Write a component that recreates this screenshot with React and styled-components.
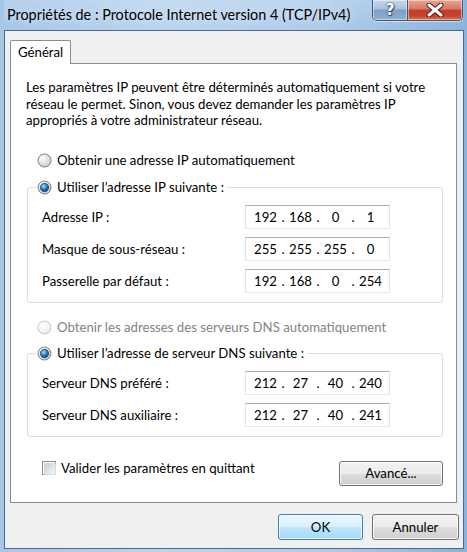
import React, { useId } from 'react';
import styled, { createGlobalStyle } from 'styled-components';

const GlobalStyle = createGlobalStyle`
  html, body { margin: 0; padding: 0; }
  body {
    width: 467px; height: 552px; overflow: hidden;
    font-family: "Lato", "Noto Sans", sans-serif;
    font-size: 13.2px; color: #000;
  }
  * { box-sizing: border-box; }
`;

const Window = styled.div`
  width: 467px;
  height: 552px;
  display: flex;
  flex-direction: column;
  padding: 0 3px 3px 4px;
  background: linear-gradient(90deg, #a6c6e8 0%, #b9d4ef 35%, #aecbea 70%, #8ab2db 100%);
`;

const TitleBar = styled.div`
  height: 30px;
  flex: none;
  display: flex;
  align-items: flex-start;
  justify-content: space-between;
  background: linear-gradient(180deg, rgba(255,255,255,0.18) 0%, rgba(255,255,255,0) 100%);
`;

const TitleText = styled.div`
  padding: 6px 0 0 3px;
  font-size: 14.4px;
  line-height: 17px;
  color: #000;
  text-shadow: 0 0 6px rgba(255,255,255,0.7);
`;

const Controls = styled.div`
  display: flex;
  margin-right: 1px;
  border: 1px solid #3f5874;
  border-top: none;
  border-radius: 0 0 5px 5px;
  overflow: hidden;
  box-shadow: 0 1px 0 rgba(255,255,255,0.5);
`;

const CtrlButton = styled.div`
  height: 20px;
  width: ${p => p.$w}px;
  display: flex;
  align-items: center;
  justify-content: center;
  box-shadow: inset 0 0 0 1px rgba(255,255,255,0.45);
  background: ${p => p.$close
    ? 'linear-gradient(180deg, #e8a493 0%, #d67a66 45%, #c2402c 50%, #c8412b 80%, #de7a55 100%)'
    : 'linear-gradient(180deg, #c5d8ec 0%, #a8c2dd 45%, #7d9fc4 50%, #8eb0d3 100%)'};
  & + & { border-left: 1px solid #3f5874; }
`;

const HelpGlyph = styled.span`
  font-family: "DejaVu Sans", sans-serif;
  font-weight: bold;
  font-size: 15px;
  line-height: 1;
  color: #fff;
  margin-top: 1px;
  text-shadow: 0 0 1px #2d4a6b, 0 0 2px #2d4a6b, 1px 1px 1px #2d4a6b;
`;

const Client = styled.div`
  flex: 1;
  display: flex;
  flex-direction: column;
  background: #f0f0f0;
  border: 1px solid #4d6a8a;
  padding: 9px 0 0 0;
`;

const TabStrip = styled.div`
  display: flex;
  padding-left: 5px;
  position: relative;
  z-index: 1;
  margin-bottom: -1px;
`;

const Tab = styled.div`
  height: 24px;
  padding: 0 7px;
  display: flex;
  align-items: center;
  padding-bottom: 1px;
  background: #fff;
  border: 1px solid #898c95;
  border-bottom: none;
  border-radius: 2px 2px 0 0;
`;

const Panel = styled.div`
  margin: 0 6px 0 5px;
  height: 440px;
  background: #fff;
  border: 1px solid #898c95;
  padding: 15px 13px 0 15px;
  display: flex;
  flex-direction: column;
`;

const Intro = styled.p`
  margin: 0;
  line-height: 16.5px;
`;

const RadioRow = styled.div`
  display: flex;
  align-items: center;
  gap: 5px;
  height: 17px;
  margin-top: ${p => p.$mt}px;
  padding-left: 11px;
  color: ${p => (p.$disabled ? '#838383' : '#000')};
`;

const Group = styled.fieldset`
  margin: ${p => p.$mt}px 0 0 1px;
  padding: 9px 0 9px 14px;
  border: 1px solid #d5dfe5;
  border-radius: 3px;
  display: flex;
  flex-direction: column;
  gap: 8px;
  min-width: 0;
`;

const Legend = styled.legend`
  margin-left: -6px;
  padding: 0 3px 0 1px;
  height: 17px;
  display: flex;
  align-items: center;
  gap: 5px;
`;

const FieldRow = styled.div`
  display: grid;
  grid-template-columns: 203px 145px;
  align-items: center;
`;

const IpBox = styled.div`
  height: 24px;
  display: flex;
  align-items: center;
  padding-left: 6px;
  background: #fff;
  border: 1px solid #e2e3ea;
  border-top-color: #abadb3;
  border-bottom-color: #e3e9ef;
`;

const Octet = styled.span`
  width: 27px;
  text-align: center;
`;

const Dot = styled.span`
  width: 8px;
  text-align: center;
`;

const BottomRow = styled.div`
  margin-top: 24px;
  display: flex;
  align-items: flex-start;
  justify-content: space-between;
  padding-left: 16px;
`;

const CheckLabel = styled.label`
  display: flex;
  align-items: center;
  gap: 5px;
  height: 17px;
  margin-top: -1px;
`;

const CheckBox = styled.span`
  width: 14px;
  height: 14px;
  border: 1px solid #8e8f8f;
  padding: 1px;
  background: #fff;
  display: block;
  &::after {
    content: '';
    display: block;
    width: 100%;
    height: 100%;
    background: linear-gradient(135deg, #cbcfd5 0%, #f6f6f6 100%);
    border: 1px solid #d8d8d8;
  }
`;

const Button = styled.div`
  width: ${p => p.$w}px;
  height: ${p => p.$h}px;
  display: flex;
  align-items: center;
  justify-content: center;
  border-radius: 3px;
  border: 1px solid ${p => (p.$default ? '#3c7fb1' : '#707070')};
  box-shadow: inset 0 0 0 1px ${p => (p.$default ? 'rgba(255,255,255,0.7)' : 'rgba(255,255,255,0.8)')};
  background: ${p => p.$default
    ? 'linear-gradient(180deg, #eaf6fd 0%, #d9f0fc 50%, #bee6fd 51%, #a7d9f5 100%)'
    : 'linear-gradient(180deg, #f2f2f2 0%, #ebebeb 50%, #dddddd 51%, #cfcfcf 100%)'};
`;

const ButtonBar = styled.div`
  margin-top: 11px;
  display: flex;
  justify-content: flex-end;
  gap: 9px;
  padding-right: 4px;
`;

function Radio({ checked, disabled }) {
  const id = useId().replace(/:/g, '');
  return (
    <svg width="15" height="15" viewBox="0 0 15 15" style={{ flex: 'none' }}>
      <defs>
        <radialGradient id={`bg${id}`} cx="0.35" cy="0.3" r="0.8">
          <stop offset="0" stopColor="#ffffff" />
          <stop offset="1" stopColor={disabled ? '#ececec' : '#c9c9c9'} />
        </radialGradient>
        <radialGradient id={`dot${id}`} cx="0.4" cy="0.35" r="0.7">
          <stop offset="0" stopColor="#a9e4ff" />
          <stop offset="0.45" stopColor="#2f8ad0" />
          <stop offset="1" stopColor="#0b3a6c" />
        </radialGradient>
      </defs>
      <circle cx="7.5" cy="7.5" r="6.5" fill={`url(#bg${id})`} stroke={disabled ? '#c7c7c7' : '#7f7f7f'} strokeWidth="1" />
      {checked && <circle cx="7.5" cy="7.5" r="4.2" fill={`url(#dot${id})`} stroke="#1d3f66" strokeWidth="0.7" />}
    </svg>
  );
}

function Ip({ parts }) {
  return (
    <IpBox>
      {parts.map((p, i) => (
        <React.Fragment key={i}>
          {i > 0 && <Dot>.</Dot>}
          <Octet>{p}</Octet>
        </React.Fragment>
      ))}
    </IpBox>
  );
}

function CloseGlyph() {
  return (
    <svg width="18" height="14" viewBox="0 0 18 14">
      <path d="M3 2 L15 12 M15 2 L3 12" stroke="#4a1c15" strokeWidth="5" strokeLinecap="round" />
      <path d="M3 2 L15 12 M15 2 L3 12" stroke="#ffffff" strokeWidth="3" strokeLinecap="round" />
    </svg>
  );
}

export default function App() {
  return (
    <>
      <GlobalStyle />
      <Window>
        <TitleBar>
          <TitleText>Propriétés de : Protocole Internet version 4 (TCP/IPv4)</TitleText>
          <Controls>
            <CtrlButton $w={34}><HelpGlyph>?</HelpGlyph></CtrlButton>
            <CtrlButton $w={55} $close><CloseGlyph /></CtrlButton>
          </Controls>
        </TitleBar>
        <Client>
          <TabStrip>
            <Tab>Général</Tab>
          </TabStrip>
          <Panel>
            <Intro>
              Les paramètres IP peuvent être déterminés automatiquement si votre<br />
              réseau le permet. Sinon, vous devez demander les paramètres IP<br />
              appropriés à votre administrateur réseau.
            </Intro>
            <RadioRow $mt={23}>
              <Radio />
              Obtenir une adresse IP automatiquement
            </RadioRow>
            <Group $mt={10}>
              <Legend><Radio checked />Utiliser l’adresse IP suivante :</Legend>
              <FieldRow><span>Adresse IP :</span><Ip parts={['192', '168', '0', '1']} /></FieldRow>
              <FieldRow><span>Masque de sous-réseau :</span><Ip parts={['255', '255', '255', '0']} /></FieldRow>
              <FieldRow><span>Passerelle par défaut :</span><Ip parts={['192', '168', '0', '254']} /></FieldRow>
            </Group>
            <RadioRow $mt={16} $disabled>
              <Radio disabled />
              Obtenir les adresses des serveurs DNS automatiquement
            </RadioRow>
            <Group $mt={9}>
              <Legend><Radio checked />Utiliser l’adresse de serveur DNS suivante :</Legend>
              <FieldRow><span>Serveur DNS préféré :</span><Ip parts={['212', '27', '40', '240']} /></FieldRow>
              <FieldRow><span>Serveur DNS auxiliaire :</span><Ip parts={['212', '27', '40', '241']} /></FieldRow>
            </Group>
            <BottomRow>
              <CheckLabel><CheckBox />Valider les paramètres en quittant</CheckLabel>
              <Button $w={104} $h={25}>Avancé...</Button>
            </BottomRow>
          </Panel>
          <ButtonBar>
            <Button $w={85} $h={26} $default>OK</Button>
            <Button $w={87} $h={26}>Annuler</Button>
          </ButtonBar>
        </Client>
      </Window>
    </>
  );
}
